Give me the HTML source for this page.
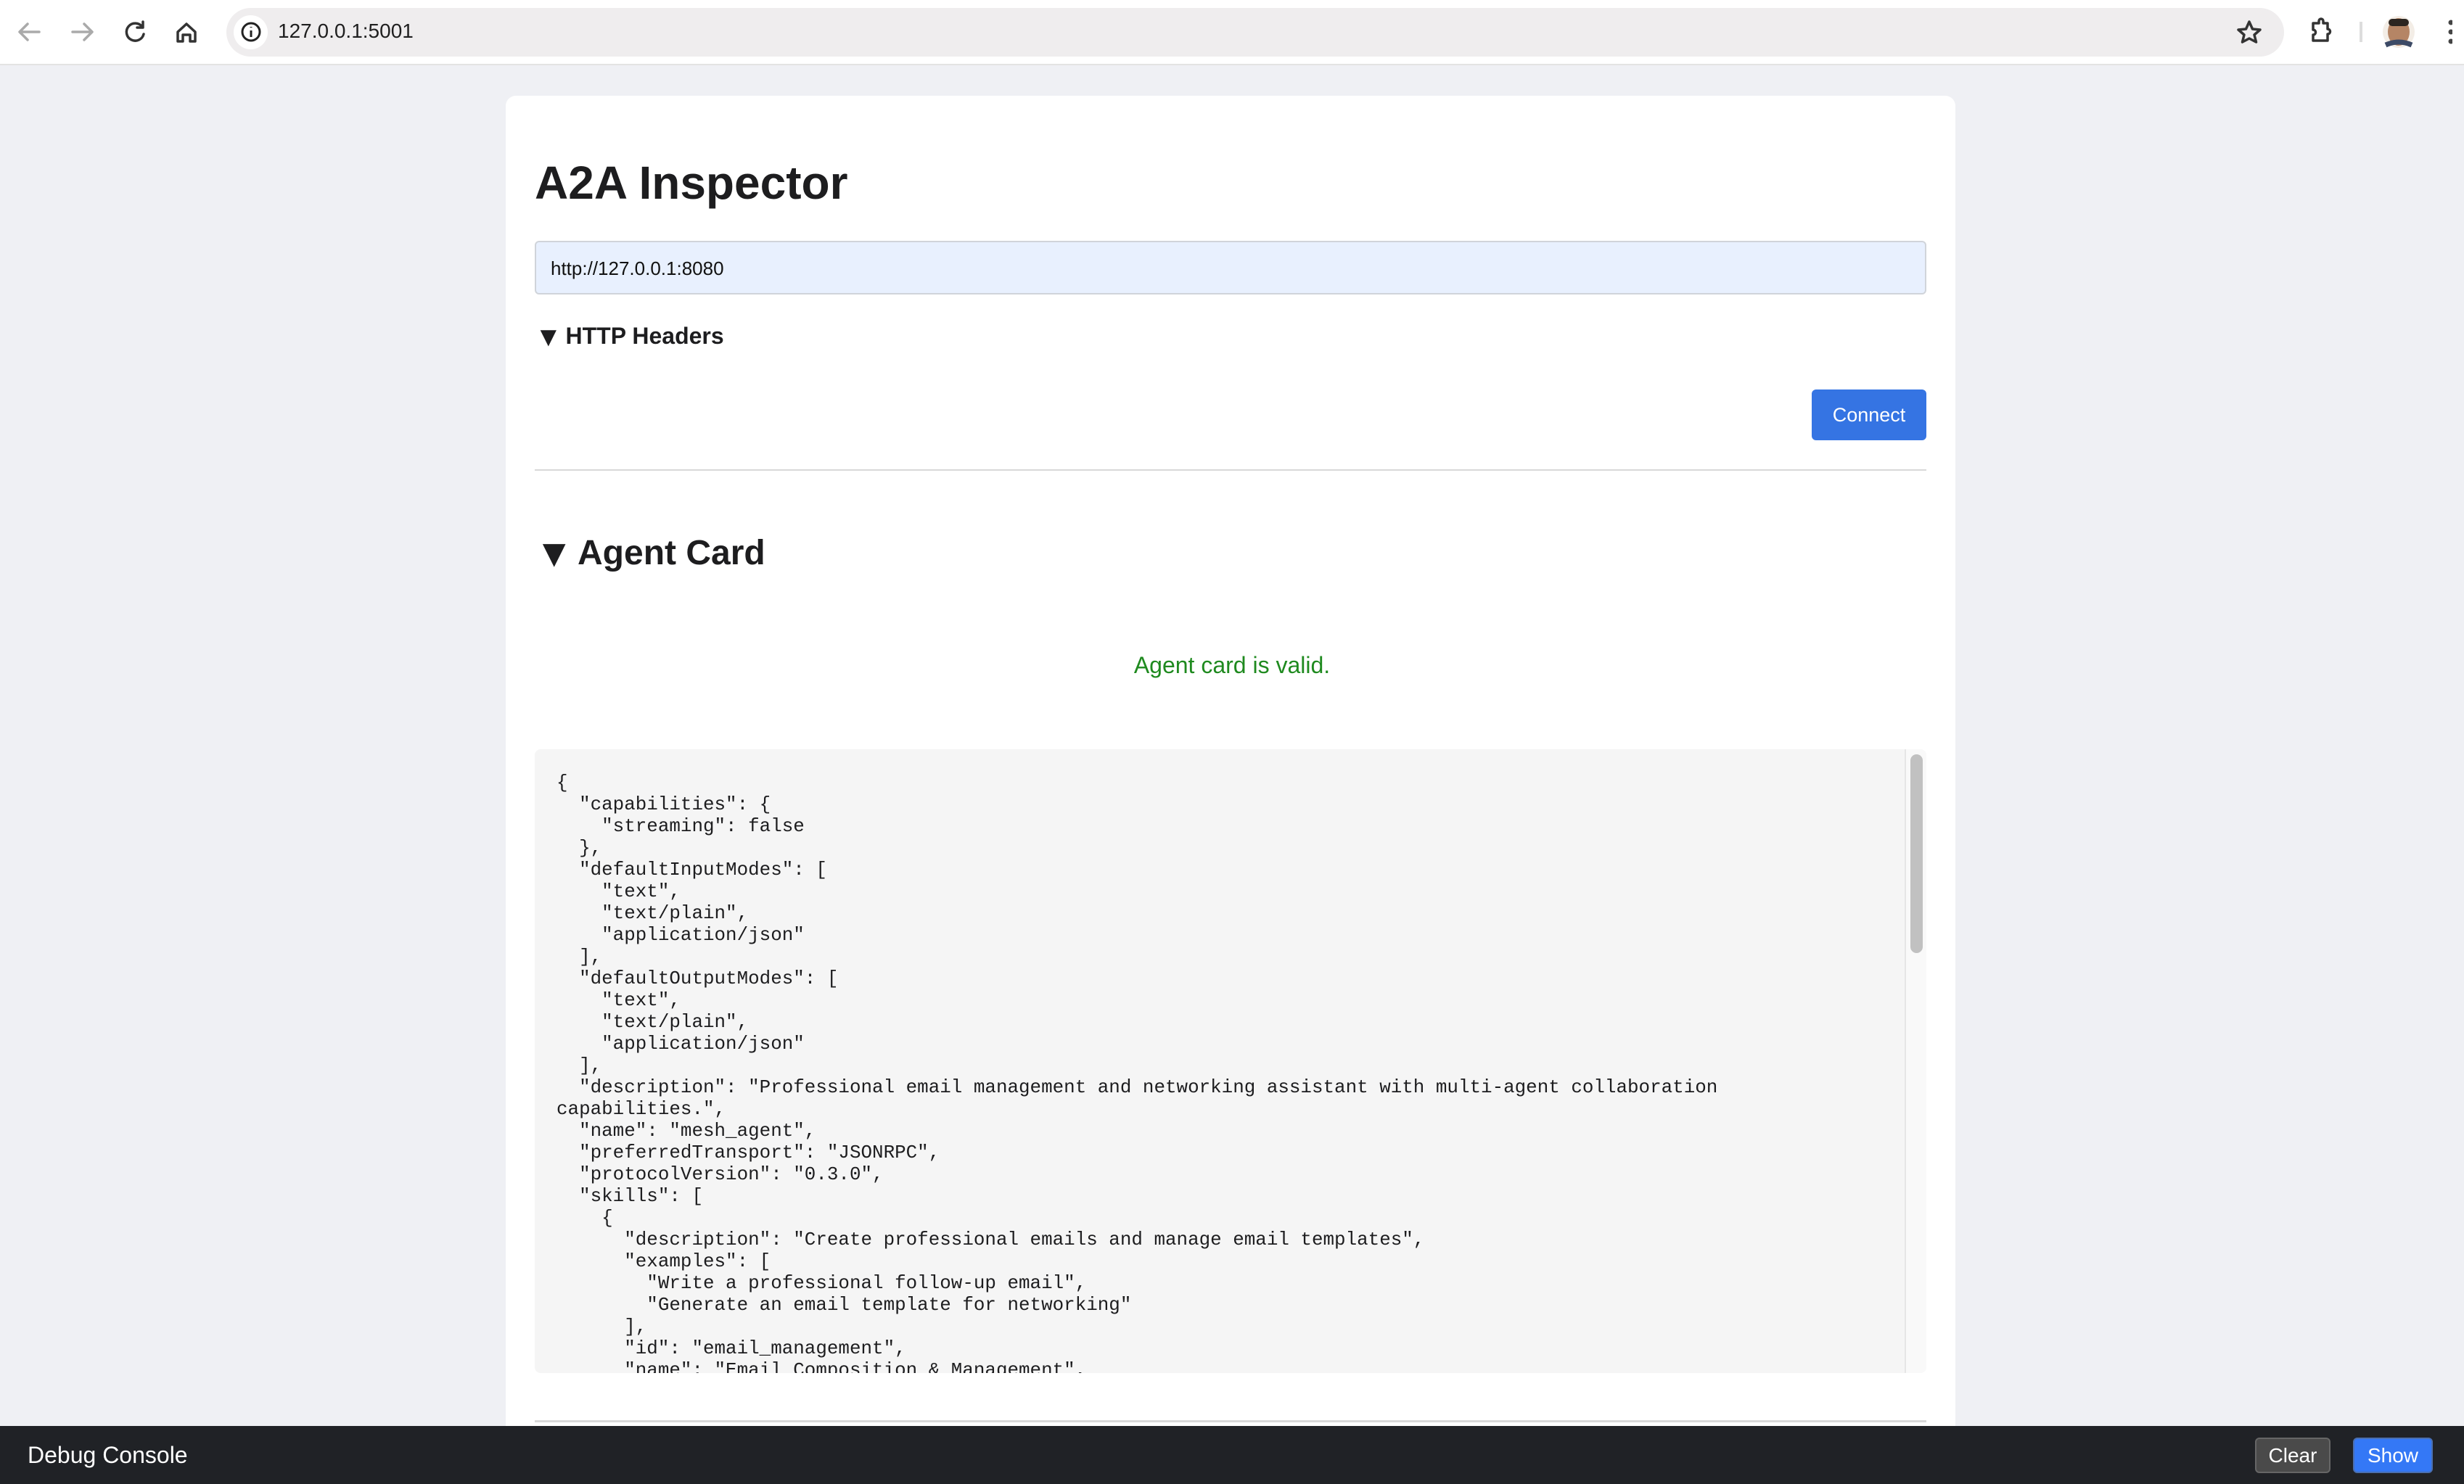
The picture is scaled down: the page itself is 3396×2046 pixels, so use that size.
<!DOCTYPE html>
<html><head><meta charset="utf-8"><style>
*{box-sizing:border-box;margin:0;padding:0}
html,body{width:3396px;height:2046px;overflow:hidden;background:#eff0f4;font-family:"Liberation Sans",Arial,sans-serif;position:relative}
.tb{position:absolute;left:0;top:0;width:3396px;height:90px;background:#fff;border-bottom:2px solid #e3e3e3}
.omni{position:absolute;left:312px;top:11px;width:2836px;height:67px;background:#efedee;border-radius:34px}
.omni .i{position:absolute;left:10px;top:10px;width:47px;height:47px;border-radius:50%;background:#fff}
.url{position:absolute;left:383px;top:27px;font-size:28px;color:#1f1f1f}
.card{position:absolute;left:697px;top:132px;width:1998px;height:1900px;background:#fff;border-radius:14px}
h1{position:absolute;left:737px;top:215px;font-size:64px;font-weight:bold;color:#1d1d1f}
.inp{position:absolute;left:737px;top:332px;width:1918px;height:74px;background:#e8f0fe;border:2px solid #d0d4da;border-radius:6px;font-size:26px;padding:21px 0 0 20px;color:#111}
.hh{position:absolute;left:737px;top:444px;font-size:32px;font-weight:bold;color:#1d1d1f}
.hh span{font-size:38px;display:inline-block;margin-right:-4px;vertical-align:-3px}
.btn{position:absolute;left:2497px;top:537px;width:158px;height:70px;background:#3574e3;border-radius:6px;color:#fff;font-size:27px;text-align:center;line-height:70px}
.hr{position:absolute;left:737px;top:647px;width:1918px;height:2px;background:#d8d8d8}
.ac{position:absolute;left:737px;top:732px;font-size:48px;font-weight:bold;color:#1d1d1f}
.ac span{font-size:54px;display:inline-block;margin-right:-6px;vertical-align:-3px}
.valid{position:absolute;left:0;width:3396px;top:899px;text-align:center;font-size:32px;color:#1f8a1f}
.pre{position:absolute;left:737px;top:1033px;width:1918px;height:860px;background:#f5f5f5;border-radius:8px;overflow:hidden}
pre{position:absolute;left:30px;top:31px;font-family:"Liberation Mono",monospace;font-size:25.9px;line-height:30px;color:#1d1d1f}
.sbt{position:absolute;right:0;top:0;width:30px;height:860px;background:#f9f9f9;border-left:2px solid #e6e6e6}
.thumb{position:absolute;left:6px;top:7px;width:17px;height:274px;border-radius:9px;background:#c1c1c1}
.hr2{position:absolute;left:737px;top:1958px;width:1918px;height:3px;background:#d8d8d8}
.dbg{position:absolute;left:0;top:1966px;width:3396px;height:80px;background:#202226}
.dbg .t{position:absolute;left:38px;top:22px;font-size:32px;color:#fff}
.b2{position:absolute;top:16px;height:49px;border-radius:6px;color:#fff;font-size:28px;text-align:center;line-height:45px}
</style></head><body>
<div class="tb">
<svg width="300" height="90" style="position:absolute;left:0;top:0" fill="none" stroke-width="3.5" stroke-linecap="round" stroke-linejoin="round">
<path d="M54 44H28M38 33L27 44L38 55" stroke="#aaa"/>
<path d="M100 44H126M116 33L127 44L116 55" stroke="#aaa"/>
<path d="M196 37A12 12 0 1 0 198 47M197 30V38H189" stroke="#333"/>
<path d="M245 44L257 33L269 44V57H262V48H252V57H245Z" stroke="#333"/>
</svg>
<div class="omni"><div class="i"></div>
<svg width="40" height="40" style="position:absolute;left:14px;top:13px"><circle cx="20" cy="20" r="12" fill="none" stroke="#222" stroke-width="3"/><path d="M20 18V27M20 13V14" stroke="#222" stroke-width="3"/></svg></div>
<div class="url">127.0.0.1:5001</div>
<svg width="300" height="90" style="position:absolute;left:3080px;top:0" fill="none" stroke="#333" stroke-width="3.5" stroke-linejoin="round">
<path d="M20 30L24.5 40L35 41L27 48L29.5 58L20 53L10.5 58L13 48L5 41L15.5 40Z"/>
<path d="M108 32H116V29a3 3 0 0 1 6 0V32H128V40a3 3 0 0 1 0 7V56H108V48a3 3 0 0 0 0-7Z"/>
<path d="M174 30V58" stroke="#ddd" stroke-width="4"/>
<circle cx="226" cy="44" r="22" fill="#f3ede6" stroke="none"/><ellipse cx="226" cy="44" rx="15" ry="19" fill="#b58565" stroke="none"/><rect x="212" y="26" width="28" height="10" rx="5" fill="#2b2520" stroke="none"/><path d="M208 62Q226 54 244 62" stroke="#3c4a66" stroke-width="7"/>
<circle cx="298" cy="31" r="3.5" fill="#444" stroke="none"/><circle cx="298" cy="44" r="3.5" fill="#444" stroke="none"/><circle cx="298" cy="57" r="3.5" fill="#444" stroke="none"/>
</svg>
</div>
<div class="card"></div>
<h1>A2A Inspector</h1>
<div class="inp">http://127.0.0.1:8080</div>
<div class="hh"><span>▼</span> HTTP Headers</div>
<div class="btn">Connect</div>
<div class="hr"></div>
<div class="ac"><span>▼</span> Agent Card</div>
<div class="valid">Agent card is valid.</div>
<div class="pre"><pre>{
  "capabilities": {
    "streaming": false
  },
  "defaultInputModes": [
    "text",
    "text/plain",
    "application/json"
  ],
  "defaultOutputModes": [
    "text",
    "text/plain",
    "application/json"
  ],
  "description": "Professional email management and networking assistant with multi-agent collaboration
capabilities.",
  "name": "mesh_agent",
  "preferredTransport": "JSONRPC",
  "protocolVersion": "0.3.0",
  "skills": [
    {
      "description": "Create professional emails and manage email templates",
      "examples": [
        "Write a professional follow-up email",
        "Generate an email template for networking"
      ],
      "id": "email_management",
      "name": "Email Composition &amp; Management",</pre>
<div class="sbt"><div class="thumb"></div></div></div>
<div class="hr2"></div>
<div class="dbg"><div class="t">Debug Console</div>
<div class="b2" style="left:3108px;width:104px;background:#4a4a4a;border:2px solid #666">Clear</div>
<div class="b2" style="left:3243px;width:110px;background:#3478f6;border:2px solid #4a6fb0">Show</div>
</div>
</body></html>
